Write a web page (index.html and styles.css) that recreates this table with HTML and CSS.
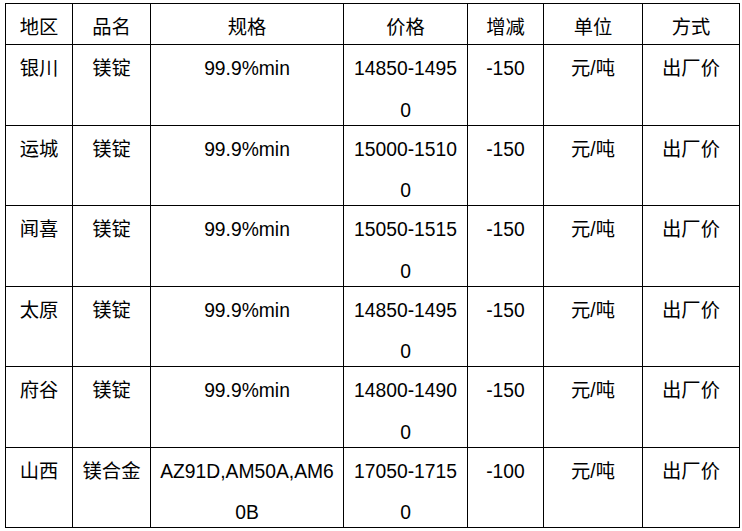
FILE: index.html
```html
<!DOCTYPE html>
<html lang="zh">
<head>
<meta charset="utf-8">
<title>镁锭价格</title>
<link rel="stylesheet" href="styles.css">
</head>
<body>
<table class="price-table">
  <colgroup>
    <col class="c-region"><col class="c-name"><col class="c-spec"><col class="c-price"><col class="c-change"><col class="c-unit"><col class="c-mode">
  </colgroup>
  <thead>
    <tr>
      <th><div class="cell head">地区</div></th>
      <th><div class="cell head">品名</div></th>
      <th><div class="cell head">规格</div></th>
      <th><div class="cell head">价格</div></th>
      <th><div class="cell head">增减</div></th>
      <th><div class="cell head">单位</div></th>
      <th><div class="cell head">方式</div></th>
    </tr>
  </thead>
  <tbody>
    <tr>
      <td><div class="cell">银川</div></td>
      <td><div class="cell">镁锭</div></td>
      <td><div class="cell">99.9%min</div></td>
      <td><div class="cell">14850-14950</div></td>
      <td><div class="cell">-150</div></td>
      <td><div class="cell">元/吨</div></td>
      <td><div class="cell">出厂价</div></td>
    </tr>
    <tr>
      <td><div class="cell">运城</div></td>
      <td><div class="cell">镁锭</div></td>
      <td><div class="cell">99.9%min</div></td>
      <td><div class="cell">15000-15100</div></td>
      <td><div class="cell">-150</div></td>
      <td><div class="cell">元/吨</div></td>
      <td><div class="cell">出厂价</div></td>
    </tr>
    <tr>
      <td><div class="cell">闻喜</div></td>
      <td><div class="cell">镁锭</div></td>
      <td><div class="cell">99.9%min</div></td>
      <td><div class="cell">15050-15150</div></td>
      <td><div class="cell">-150</div></td>
      <td><div class="cell">元/吨</div></td>
      <td><div class="cell">出厂价</div></td>
    </tr>
    <tr>
      <td><div class="cell">太原</div></td>
      <td><div class="cell">镁锭</div></td>
      <td><div class="cell">99.9%min</div></td>
      <td><div class="cell">14850-14950</div></td>
      <td><div class="cell">-150</div></td>
      <td><div class="cell">元/吨</div></td>
      <td><div class="cell">出厂价</div></td>
    </tr>
    <tr>
      <td><div class="cell">府谷</div></td>
      <td><div class="cell">镁锭</div></td>
      <td><div class="cell">99.9%min</div></td>
      <td><div class="cell">14800-14900</div></td>
      <td><div class="cell">-150</div></td>
      <td><div class="cell">元/吨</div></td>
      <td><div class="cell">出厂价</div></td>
    </tr>
    <tr>
      <td><div class="cell">山西</div></td>
      <td><div class="cell">镁合金</div></td>
      <td><div class="cell">AZ91D,AM50A,AM60B</div></td>
      <td><div class="cell">17050-17150</div></td>
      <td><div class="cell">-100</div></td>
      <td><div class="cell">元/吨</div></td>
      <td><div class="cell">出厂价</div></td>
    </tr>
  </tbody>
</table>
</body>
</html>
```
FILE: styles.css
```css
html, body {
  margin: 0;
  background: #fff;
}
body {
  padding: 3px 0 0 5px;
  font-family: "Liberation Sans", "Noto Sans CJK SC", sans-serif;
  font-size: 19.3px;
  color: #000;
}
.price-table {
  border-collapse: collapse;
  table-layout: fixed;
  width: 734px;
}
.c-region { width: 67px; }
.c-name { width: 78px; }
.c-spec { width: 193px; }
.c-price { width: 124px; }
.c-change { width: 76px; }
.c-unit { width: 99px; }
.c-mode { width: 97px; }
.price-table th,
.price-table td {
  border: 1px solid #000;
  padding: 0 7px;
  vertical-align: top;
  text-align: center;
  font-weight: normal;
}
.cell {
  padding-top: 3px;
  height: 76.5px;
  line-height: 41.6px;
  word-break: break-all;
  overflow: visible;
}
.cell.head {
  height: 37px;
}
```
